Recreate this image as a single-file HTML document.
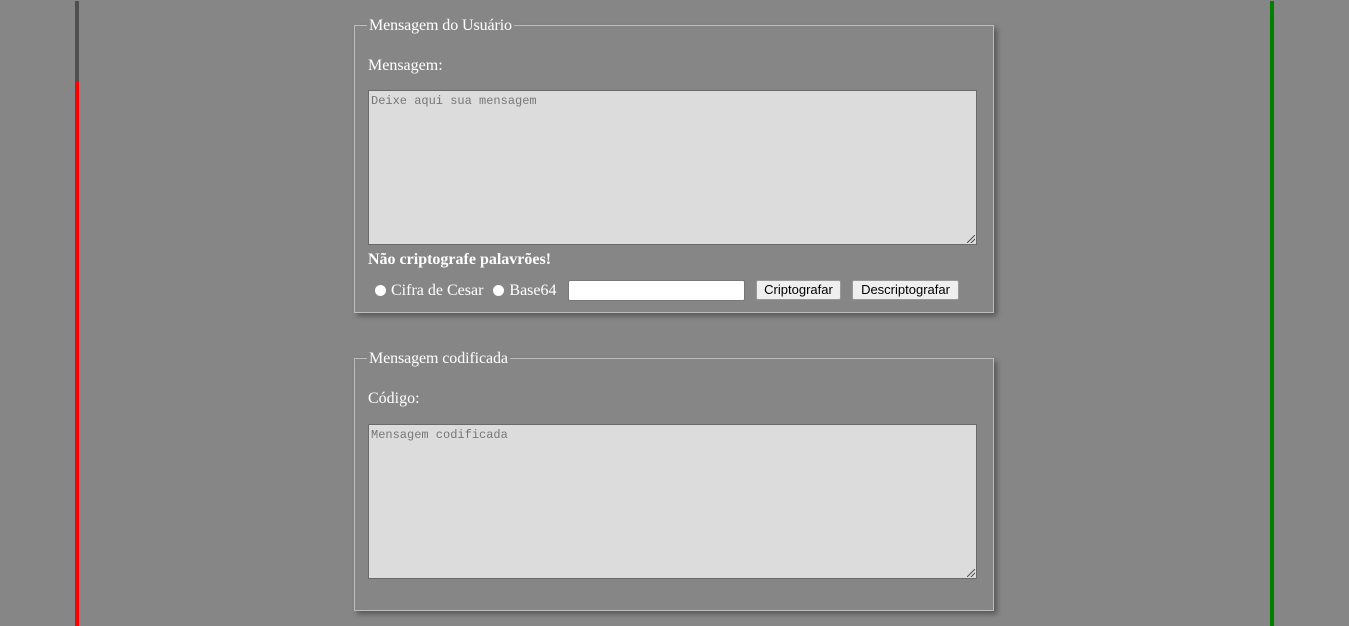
<!DOCTYPE html>
<html><head><meta charset="utf-8"><style>
html,body{margin:0;padding:0;}
body{width:1349px;height:626px;background:#868686;position:relative;overflow:hidden;font-family:"Liberation Serif",serif;color:#fff;}
.l1{position:absolute;left:75px;top:1px;width:4px;height:80px;background:#4f4f4f;}
.l2{position:absolute;left:75px;top:81px;width:4px;height:545px;background:#f00;}
.r{position:absolute;left:1270px;top:1px;width:4px;height:625px;background:#008000;}
.fs{position:absolute;left:354px;width:638px;border:1px solid #bdbdbd;border-top-color:#bdbdbd;box-shadow:3px 3px 5px rgba(0,0,0,.35);}
.lg{position:absolute;top:-9px;left:12px;background:#868686;padding:0 2px;font-size:16px;line-height:18px;letter-spacing:-0.1px;}
.lab{position:absolute;left:13px;font-size:16px;}
.ta{position:absolute;left:13px;width:607px;height:153px;background:#dcdcdc;border:1px solid #6a6a6a;box-sizing:content-box;}
.ta span{position:absolute;left:2px;top:3px;font-family:"Liberation Mono",monospace;font-size:12px;color:#777;}
.ta i{position:absolute;right:1px;bottom:1px;width:8px;height:8px;background:linear-gradient(135deg,transparent 45%,#555 45%,#555 55%,transparent 55%,transparent 70%,#555 70%,#555 80%,transparent 80%);}
.rad{display:inline-block;width:11px;height:11px;border-radius:50%;background:#fff;vertical-align:-1px;margin-right:5px;}
.btn{position:absolute;top:254px;height:18px;background:#efefef;border:1px solid #999;border-radius:2px;color:#000;font-family:"Liberation Sans",sans-serif;font-size:13px;line-height:18px;text-align:center;}
</style></head><body>
<div class="l1"></div><div class="l2"></div><div class="r"></div>
<div class="fs" style="top:25px;height:286px;">
 <div class="lg">Mensagem do Usuário</div>
 <div class="lab" style="top:31px;">Mensagem:</div>
 <div class="ta" style="top:64px;"><span>Deixe aqui sua mensagem</span><i></i></div>
 <div class="lab" style="top:225px;font-weight:bold;">Não criptografe palavrões!</div>
 <div class="lab" style="top:256px;left:20px;"><span class="rad"></span>Cifra de Cesar <span class="rad" style="margin-left:6px"></span>Base64</div>
 <div style="position:absolute;left:213px;top:254px;width:175px;height:19px;background:#fff;border:1px solid #777;border-radius:2px;"></div>
 <div class="btn" style="left:401px;width:83px;">Criptografar</div>
 <div class="btn" style="left:497px;width:105px;">Descriptografar</div>
</div>
<div class="fs" style="top:358px;height:251px;">
 <div class="lg">Mensagem codificada</div>
 <div class="lab" style="top:31px;">Código:</div>
 <div class="ta" style="top:65px;"><span>Mensagem codificada</span><i></i></div>
</div>
</body></html>
